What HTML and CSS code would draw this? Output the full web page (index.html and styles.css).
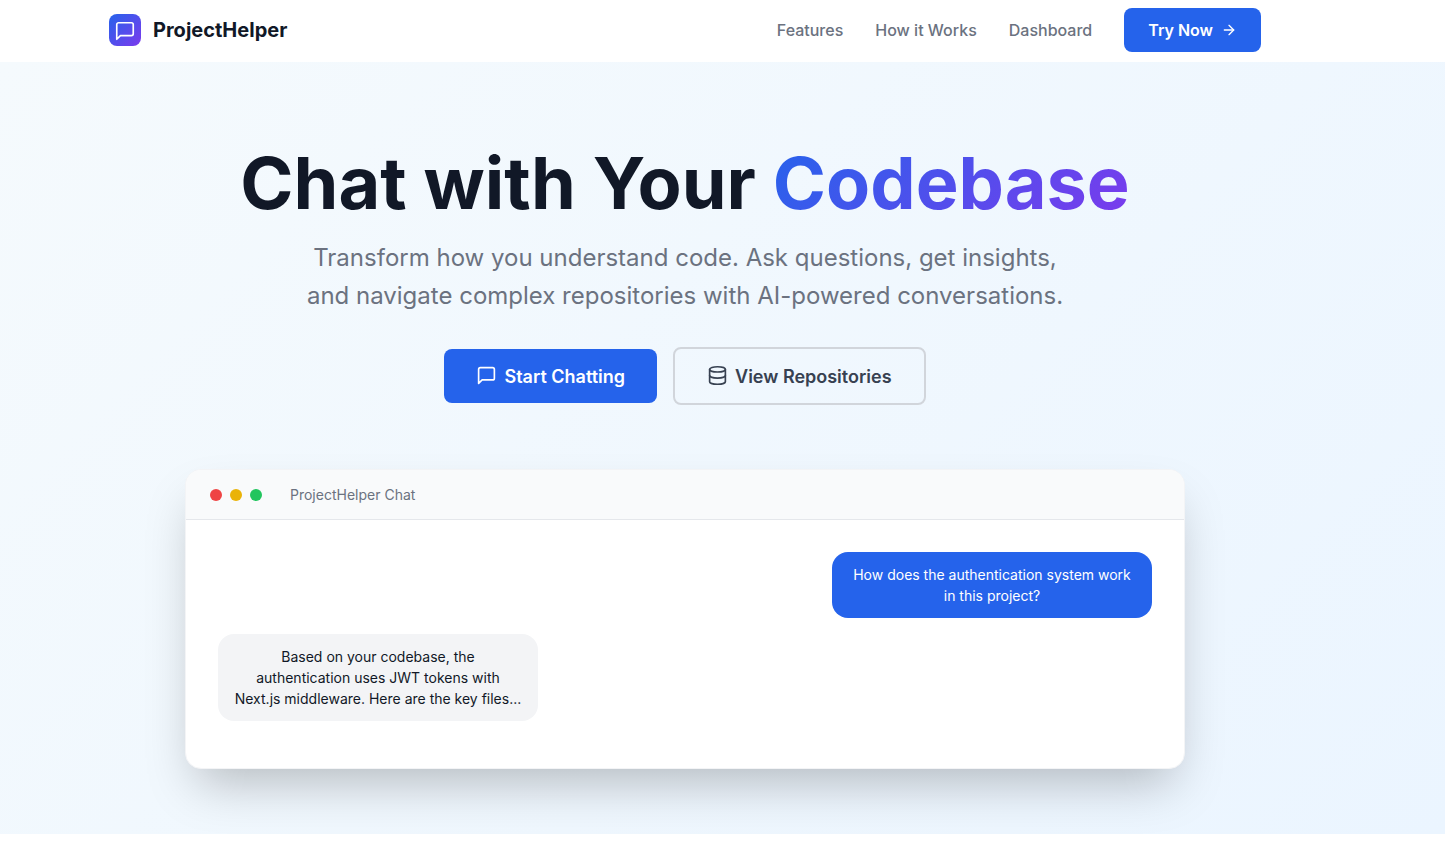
FILE: index.html
```html
<!DOCTYPE html>
<html lang="en">
<head>
<meta charset="utf-8">
<title>ProjectHelper</title>
<link rel="stylesheet" href="styles.css">
</head>
<body>
<header class="nav">
  <div class="nav-inner">
    <a class="brand" href="#">
      <span class="logo">
        <svg width="22" height="22" viewBox="0 0 24 24" fill="none" stroke="#fff" stroke-width="1.8" stroke-linecap="round" stroke-linejoin="round"><path d="M21 15a2 2 0 0 1-2 2H7l-4 4V5a2 2 0 0 1 2-2h14a2 2 0 0 1 2 2z"/></svg>
      </span>
      <span class="brand-name">ProjectHelper</span>
    </a>
    <nav class="links">
      <a href="#">Features</a>
      <a href="#">How it Works</a>
      <a href="#">Dashboard</a>
      <a class="try" href="#">Try Now
        <svg width="16" height="16" viewBox="0 0 24 24" fill="none" stroke="#fff" stroke-width="2" stroke-linecap="round" stroke-linejoin="round"><path d="M5 12h14"/><path d="m12 5 7 7-7 7"/></svg>
      </a>
    </nav>
  </div>
</header>
<main class="hero">
  <h1 class="title">Chat with Your <span class="grad">Codebase</span></h1>
  <p class="sub">Transform how you understand code. Ask questions, get insights,<br>and navigate complex repositories with AI-powered conversations.</p>
  <div class="actions">
    <a class="btn primary" href="#">
      <svg width="21" height="21" viewBox="0 0 24 24" fill="none" stroke="#fff" stroke-width="1.9" stroke-linecap="round" stroke-linejoin="round"><path d="M21 15a2 2 0 0 1-2 2H7l-4 4V5a2 2 0 0 1 2-2h14a2 2 0 0 1 2 2z"/></svg>
      Start Chatting
    </a>
    <a class="btn secondary" href="#">
      <svg width="21" height="21" viewBox="0 0 24 24" fill="none" stroke="#374151" stroke-width="1.9" stroke-linecap="round" stroke-linejoin="round"><ellipse cx="12" cy="5" rx="9" ry="3"/><path d="M3 5v14a9 3 0 0 0 18 0V5"/><path d="M3 12a9 3 0 0 0 18 0"/></svg>
      View Repositories
    </a>
  </div>
  <section class="window">
    <div class="win-bar">
      <span class="dot red"></span>
      <span class="dot yellow"></span>
      <span class="dot green"></span>
      <span class="win-title">ProjectHelper Chat</span>
    </div>
    <div class="chat">
      <div class="bubble user">How does the authentication system work in this project?</div>
      <div class="bubble bot">Based on your codebase, the authentication uses JWT tokens with Next.js middleware. Here are the key files...</div>
    </div>
  </section>
</main>
</body>
</html>
```
FILE: styles.css
```css
* { box-sizing: border-box; }
html, body { margin: 0; padding: 0; }
body { font-family: Inter, "Liberation Sans", sans-serif; background: #fff; color: #111827; height: 844px; overflow: hidden; }
a { text-decoration: none; color: inherit; }

.nav { height: 62px; background: #fff; padding-right: 75px; }
.nav-inner { width: 1152px; margin: 0 auto; height: 60px; display: flex; align-items: center; justify-content: space-between; }
.brand { display: flex; align-items: center; gap: 12px; }
.logo { width: 32px; height: 32px; padding-top: 2px; border-radius: 8px; background: linear-gradient(135deg, #2563eb, #7c3aed); display: flex; align-items: center; justify-content: center; }
.brand-name { font-size: 20px; font-weight: 700; color: #111827; line-height: 28px; }
.links { display: flex; align-items: center; gap: 32px; font-size: 16px; font-weight: 500; color: #6b7280; }
.try { display: flex; align-items: center; gap: 8px; height: 44px; padding: 0 24px; background: #2563eb; color: #fff; border-radius: 8px; font-weight: 600; }

.hero { height: 772px; background: linear-gradient(135deg, #f5fafd 0%, #ebf5ff 100%); padding: 81px 75px 0 0; display: flex; flex-direction: column; align-items: center; text-align: center; }
.title { margin: 0; font-size: 72px; font-weight: 700; line-height: 79px; color: #111827; }
.grad { background: linear-gradient(135deg, #2563eb, #7c3aed); -webkit-background-clip: text; background-clip: text; color: transparent; }
.sub { margin: 17px 0 0; font-size: 24px; line-height: 38px; color: #6b7280; font-weight: 400; }
.actions { margin-top: 32px; display: flex; align-items: center; gap: 16px; }
.btn { display: flex; align-items: center; justify-content: center; gap: 7px; font-size: 18px; font-weight: 600; line-height: 28px; border-radius: 8px; }
.btn svg { margin-top: -2px; }
.primary { height: 54px; padding: 1px 32px 0; background: #2563eb; color: #fff; }
.secondary { height: 58px; padding: 1px 32px 0; border: 2px solid #d1d5db; color: #374151; }

.window { margin-top: 64px; width: 1000px; height: 300px; background: #fff; border: 1px solid #f3f4f6; border-radius: 16px; box-shadow: 0 25px 50px -12px rgba(0,0,0,0.25); overflow: hidden; text-align: center; }
.win-bar { height: 50px; background: #f9fafb; border-bottom: 1px solid #e5e7eb; display: flex; align-items: center; padding: 0 24px; gap: 8px; }
.dot { width: 12px; height: 12px; border-radius: 50%; }
.red { background: #ef4444; }
.yellow { background: #eab308; }
.green { background: #22c55e; }
.win-title { margin-left: 20px; font-size: 14px; color: #6b7280; }
.chat { padding: 32px; display: flex; flex-direction: column; gap: 16px; }
.bubble { width: 320px; padding: 12px 16px; border-radius: 16px; font-size: 14px; line-height: 21px; }
.user { align-self: flex-end; background: #2563eb; color: #fff; }
.bot { align-self: flex-start; background: #f3f4f6; color: #111827; }
```
